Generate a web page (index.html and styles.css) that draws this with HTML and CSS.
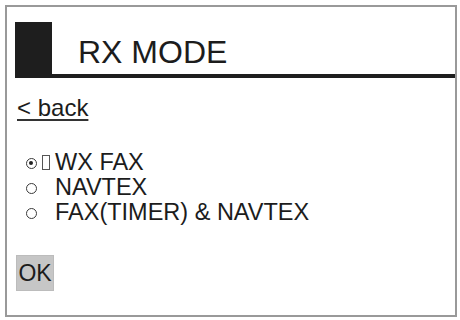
FILE: index.html
```html
<!DOCTYPE html>
<html>
<head>
<meta charset="utf-8">
<link rel="stylesheet" href="styles.css">
</head>
<body>
<div class="frame">
  <div class="header">
    <div class="block"></div>
    <div class="title">RX MODE</div>
  </div>
  <a class="back" href="#">&lt; back</a>
  <ul class="options">
    <li class="opt"><span class="mark"><span class="radio on"></span><span class="tofu"></span></span>WX FAX</li>
    <li class="opt"><span class="mark"><span class="radio"></span></span>NAVTEX</li>
    <li class="opt"><span class="mark"><span class="radio"></span></span>FAX(TIMER) &amp; NAVTEX</li>
  </ul>
  <button class="ok">OK</button>
</div>
</body>
</html>
```
FILE: styles.css
```css
html, body {
  margin: 0;
  padding: 0;
  background: #fff;
}
body {
  font-family: "Liberation Sans", Arial, sans-serif;
  color: #1c1c1c;
}
.frame {
  box-sizing: border-box;
  margin: 5px 0 0 5px;
  width: 452px;
  height: 312px;
  border: 2px solid #999;
}
.header {
  display: flex;
  align-items: flex-start;
  margin: 15px 0 0 8px;
  height: 52px;
  border-bottom: 4px solid #1e1e1e;
}
.block {
  width: 37px;
  height: 52px;
  background: #1e1e1e;
}
.title {
  font-size: 32px;
  line-height: 32px;
  margin: 14px 0 0 26px;
}
.back {
  display: block;
  width: max-content;
  margin: 18px 0 0 10px;
  font-size: 24px;
  line-height: 24px;
  color: #1c1c1c;
  text-decoration: underline;
  text-decoration-thickness: 2px;
  text-underline-offset: 3px;
  text-decoration-color: #333;
}
.options {
  list-style: none;
  margin: 30px 0 0 19px;
  padding: 0;
  font-size: 23.5px;
  line-height: 25px;
}
.opt {
  white-space: nowrap;
}
.mark {
  display: inline-block;
  width: 29px;
  vertical-align: baseline;
}
.radio {
  display: inline-block;
  box-sizing: border-box;
  width: 11px;
  height: 11px;
  border: 1.6px solid #3a3a3a;
  border-radius: 50%;
  vertical-align: 1px;
  position: relative;
}
.radio.on::after {
  content: "";
  position: absolute;
  left: 2px;
  top: 2px;
  width: 4px;
  height: 4px;
  border-radius: 50%;
  background: #222;
}
.tofu {
  display: inline-block;
  box-sizing: border-box;
  width: 8px;
  height: 15px;
  border: 1px solid #555;
  margin-left: 5px;
  vertical-align: 0;
}
.ok {
  display: block;
  -webkit-appearance: none;
  appearance: none;
  box-sizing: border-box;
  margin: 30px 0 0 9px;
  width: 38px;
  height: 36px;
  padding: 0;
  border: 1px solid #bcbcbc;
  background: #c6c6c6;
  font-family: "Liberation Sans", Arial, sans-serif;
  font-size: 23px;
  line-height: 34px;
  color: #1c1c1c;
  text-align: center;
}
```
